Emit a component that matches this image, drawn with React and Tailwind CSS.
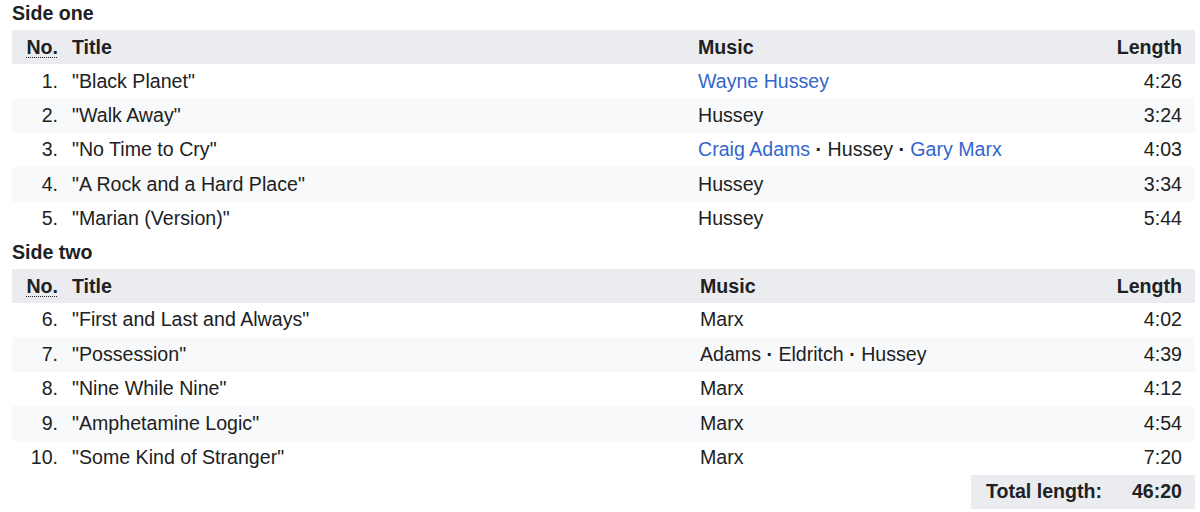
import React from 'react';

const sideOne = [
  { no: 1, title: 'Black Planet', music: [{ t: 'Wayne Hussey', link: true }], length: '4:26' },
  { no: 2, title: 'Walk Away', music: [{ t: 'Hussey' }], length: '3:24' },
  { no: 3, title: 'No Time to Cry', music: [{ t: 'Craig Adams', link: true }, { t: 'Hussey' }, { t: 'Gary Marx', link: true }], length: '4:03' },
  { no: 4, title: 'A Rock and a Hard Place', music: [{ t: 'Hussey' }], length: '3:34' },
  { no: 5, title: 'Marian (Version)', music: [{ t: 'Hussey' }], length: '5:44' },
];

const sideTwo = [
  { no: 6, title: 'First and Last and Always', music: [{ t: 'Marx' }], length: '4:02' },
  { no: 7, title: 'Possession', music: [{ t: 'Adams' }, { t: 'Eldritch' }, { t: 'Hussey' }], length: '4:39' },
  { no: 8, title: 'Nine While Nine', music: [{ t: 'Marx' }], length: '4:12' },
  { no: 9, title: 'Amphetamine Logic', music: [{ t: 'Marx' }], length: '4:54' },
  { no: 10, title: 'Some Kind of Stranger', music: [{ t: 'Marx' }], length: '7:20' },
];

const Music = ({ items }) => (
  <>
    {items.map((m, i) => (
      <React.Fragment key={i}>
        {i > 0 && <span className="font-bold"> · </span>}
        <span className={m.link ? 'text-[#3366cc]' : ''}>{m.t}</span>
      </React.Fragment>
    ))}
  </>
);

const Side = ({ caption, rows, titleWidth, className = '' }) => (
  <div className={className}>
    <div className="h-[30px] leading-[27px] font-bold">{caption}</div>
    <table className="w-[1183px] table-fixed border-collapse">
      <colgroup>
        <col className="w-[54px]" />
        <col style={{ width: titleWidth }} />
        <col />
        <col className="w-[85px]" />
      </colgroup>
      <thead>
        <tr className="h-[34px] bg-[#eaecf0]">
          <th className="pr-[8px] pt-[2px] text-right font-bold">
            <abbr className="underline decoration-dotted decoration-1 underline-offset-[3px]" title="Number">No.</abbr>
          </th>
          <th className="pl-[6px] pt-[2px] text-left font-bold">Title</th>
          <th className="pl-[6px] pt-[2px] text-left font-bold">Music</th>
          <th className="pr-[13px] pt-[2px] text-right font-bold">Length</th>
        </tr>
      </thead>
      <tbody>
        {rows.map((r, i) => (
          <tr key={r.no} className={`h-[34.4px] ${i % 2 === 1 ? 'bg-[#f8f9fa]' : 'bg-white'}`}>
            <td className="pr-[8px] text-right">{r.no}.</td>
            <td className="pl-[6px]">"{r.title}"</td>
            <td className="pl-[6px]"><Music items={r.music} /></td>
            <td className="pr-[13px] text-right">{r.length}</td>
          </tr>
        ))}
      </tbody>
    </table>
  </div>
);

export default function App() {
  return (
    <div
      className="w-[1200px] h-[512px] bg-white pl-[12px] text-[19.6px] text-[#202122] overflow-hidden"
      style={{ fontFamily: '"Liberation Sans", Arial, sans-serif' }}
    >
      <Side caption="Side one" rows={sideOne} titleWidth="626px" />
      <Side caption="Side two" rows={sideTwo} titleWidth="628px" className="mt-[3px]" />
      <div className="w-[1183px] flex justify-end">
        <div className="w-[224px] h-[34px] bg-[#eaecf0] flex items-center font-bold">
          <span className="w-[139px] pr-[8px] text-right">Total length:</span>
          <span className="flex-1 pr-[13px] text-right">46:20</span>
        </div>
      </div>
    </div>
  );
}
